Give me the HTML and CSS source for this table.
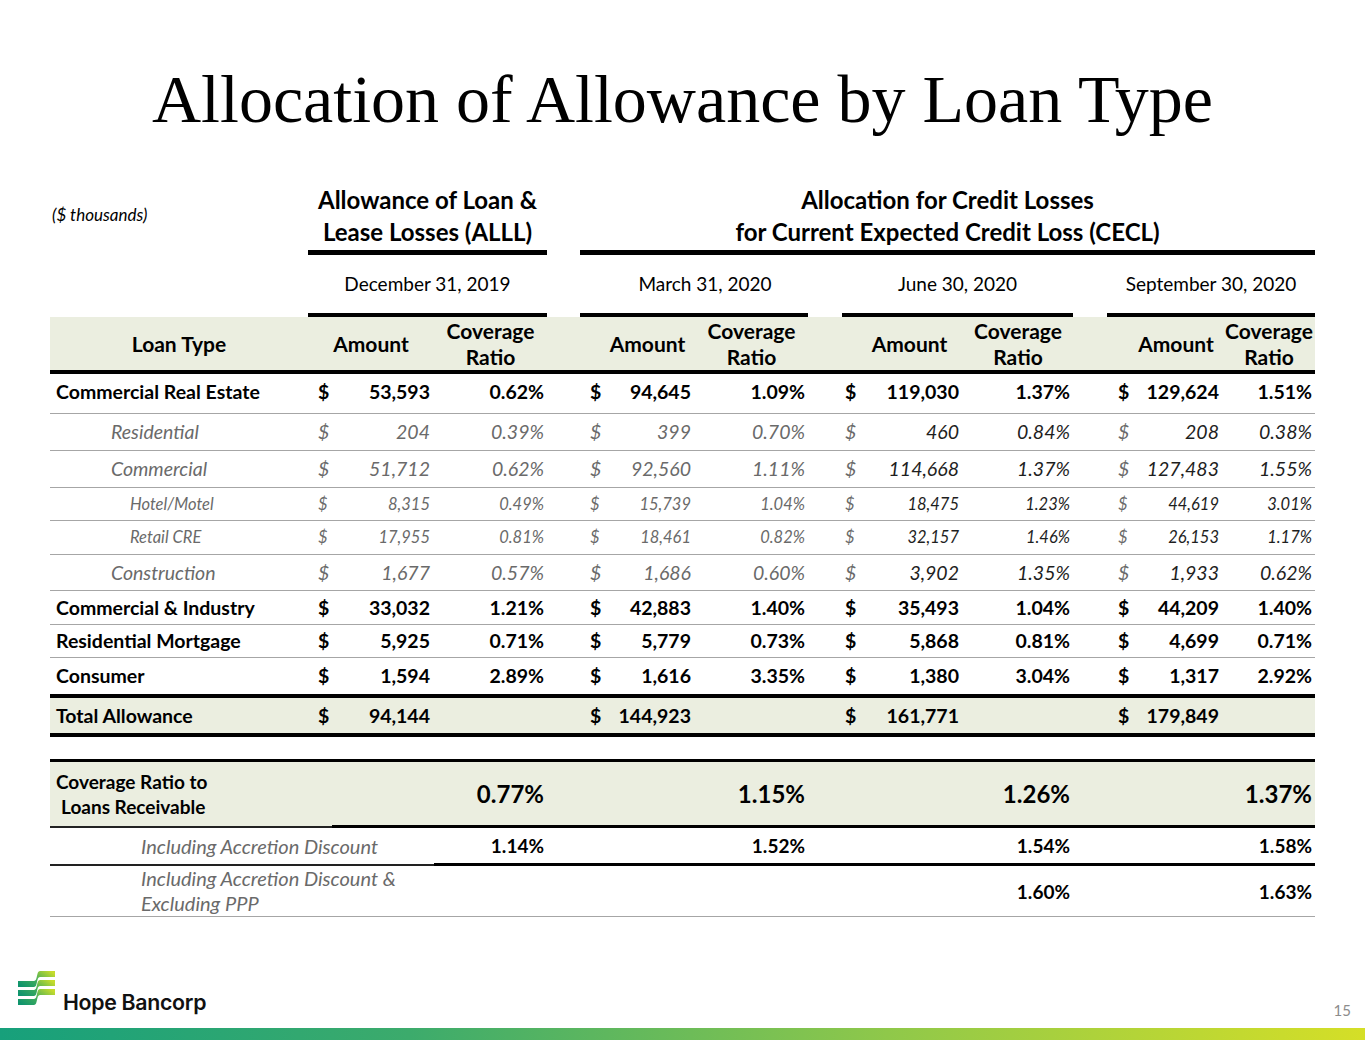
FILE: index.html
```html
<!DOCTYPE html>
<html>
<head>
<meta charset="utf-8">
<title>Allocation of Allowance by Loan Type</title>
<link rel="stylesheet" href="styles.css">
</head>
<body>
<div class="slide">
  <h1 class="title">Allocation of Allowance by Loan Type</h1>
  <table class="alloc">
    <colgroup>
      <col style="width:258px"><col style="width:24px"><col style="width:102px"><col style="width:113px">
      <col style="width:33px"><col style="width:32px"><col style="width:83px"><col style="width:113px">
      <col style="width:34px"><col style="width:28px"><col style="width:93px"><col style="width:110px">
      <col style="width:34px"><col style="width:33px"><col style="width:83px"><col style="width:92px">
    </colgroup>
    <tr class="grp-row">
      <td class="units">($ thousands)</td>
      <td colspan="3" class="grp">Allowance of Loan &amp;<br>Lease Losses (ALLL)</td>
      <td></td>
      <td colspan="11" class="grp">Allocation for Credit Losses<br>for Current Expected Credit Loss (CECL)</td>
    </tr>
    <tr class="date-row">
      <td></td>
      <td colspan="3" class="date">December 31, 2019</td>
      <td></td>
      <td colspan="3" class="date date-mar">March 31, 2020</td>
      <td></td>
      <td colspan="3" class="date">June 30, 2020</td>
      <td></td>
      <td colspan="3" class="date">September 30, 2020</td>
    </tr>
    <tr class="head-row">
      <th class="lt">Loan Type</th>
      <th colspan="2" class="amt">Amount</th><th class="cov">Coverage<br>Ratio</th><th></th>
      <th colspan="2" class="amt amt2">Amount</th><th class="cov">Coverage<br>Ratio</th><th></th>
      <th colspan="2" class="amt amt3">Amount</th><th class="cov">Coverage<br>Ratio</th><th></th>
      <th colspan="2" class="amt amt4">Amount</th><th class="cov">Coverage<br>Ratio</th>
    </tr>
    <tr class="main r-cre">
      <td class="lbl">Commercial Real Estate</td>
      <td class="d d1">$</td><td class="n">53,593</td><td class="r">0.62%</td><td></td>
      <td class="d d2">$</td><td class="n">94,645</td><td class="r">1.09%</td><td></td>
      <td class="d d3">$</td><td class="n">119,030</td><td class="r">1.37%</td><td></td>
      <td class="d d4">$</td><td class="n">129,624</td><td class="r">1.51%</td>
    </tr>
    <tr class="sub r-res">
      <td class="lbl">Residential</td>
      <td class="d d1">$</td><td class="n">204</td><td class="r">0.39%</td><td></td>
      <td class="d d2">$</td><td class="n">399</td><td class="r">0.70%</td><td></td>
      <td class="d d3">$</td><td class="n dk">460</td><td class="r dk">0.84%</td><td></td>
      <td class="d d4">$</td><td class="n dk">208</td><td class="r dk">0.38%</td>
    </tr>
    <tr class="sub r-com">
      <td class="lbl">Commercial</td>
      <td class="d d1">$</td><td class="n">51,712</td><td class="r">0.62%</td><td></td>
      <td class="d d2">$</td><td class="n">92,560</td><td class="r">1.11%</td><td></td>
      <td class="d d3">$</td><td class="n dk">114,668</td><td class="r dk">1.37%</td><td></td>
      <td class="d d4">$</td><td class="n dk">127,483</td><td class="r dk">1.55%</td>
    </tr>
    <tr class="sub2 r-hot">
      <td class="lbl">Hotel/Motel</td>
      <td class="d d1">$</td><td class="n">8,315</td><td class="r">0.49%</td><td></td>
      <td class="d d2">$</td><td class="n">15,739</td><td class="r">1.04%</td><td></td>
      <td class="d d3">$</td><td class="n dk">18,475</td><td class="r dk">1.23%</td><td></td>
      <td class="d d4">$</td><td class="n dk">44,619</td><td class="r dk">3.01%</td>
    </tr>
    <tr class="sub2 r-ret">
      <td class="lbl">Retail CRE</td>
      <td class="d d1">$</td><td class="n">17,955</td><td class="r">0.81%</td><td></td>
      <td class="d d2">$</td><td class="n">18,461</td><td class="r">0.82%</td><td></td>
      <td class="d d3">$</td><td class="n dk">32,157</td><td class="r dk">1.46%</td><td></td>
      <td class="d d4">$</td><td class="n dk">26,153</td><td class="r dk">1.17%</td>
    </tr>
    <tr class="sub r-con">
      <td class="lbl">Construction</td>
      <td class="d d1">$</td><td class="n">1,677</td><td class="r">0.57%</td><td></td>
      <td class="d d2">$</td><td class="n">1,686</td><td class="r">0.60%</td><td></td>
      <td class="d d3">$</td><td class="n dk">3,902</td><td class="r dk">1.35%</td><td></td>
      <td class="d d4">$</td><td class="n dk">1,933</td><td class="r dk">0.62%</td>
    </tr>
    <tr class="main r-ci">
      <td class="lbl">Commercial &amp; Industry</td>
      <td class="d d1">$</td><td class="n">33,032</td><td class="r">1.21%</td><td></td>
      <td class="d d2">$</td><td class="n">42,883</td><td class="r">1.40%</td><td></td>
      <td class="d d3">$</td><td class="n">35,493</td><td class="r">1.04%</td><td></td>
      <td class="d d4">$</td><td class="n">44,209</td><td class="r">1.40%</td>
    </tr>
    <tr class="main r-rm">
      <td class="lbl">Residential Mortgage</td>
      <td class="d d1">$</td><td class="n">5,925</td><td class="r">0.71%</td><td></td>
      <td class="d d2">$</td><td class="n">5,779</td><td class="r">0.73%</td><td></td>
      <td class="d d3">$</td><td class="n">5,868</td><td class="r">0.81%</td><td></td>
      <td class="d d4">$</td><td class="n">4,699</td><td class="r">0.71%</td>
    </tr>
    <tr class="main r-cons">
      <td class="lbl">Consumer</td>
      <td class="d d1">$</td><td class="n">1,594</td><td class="r">2.89%</td><td></td>
      <td class="d d2">$</td><td class="n">1,616</td><td class="r">3.35%</td><td></td>
      <td class="d d3">$</td><td class="n">1,380</td><td class="r">3.04%</td><td></td>
      <td class="d d4">$</td><td class="n">1,317</td><td class="r">2.92%</td>
    </tr>
    <tr class="main r-tot">
      <td class="lbl">Total Allowance</td>
      <td class="d d1">$</td><td class="n">94,144</td><td class="r"></td><td></td>
      <td class="d d2">$</td><td class="n">144,923</td><td class="r"></td><td></td>
      <td class="d d3">$</td><td class="n">161,771</td><td class="r"></td><td></td>
      <td class="d d4">$</td><td class="n">179,849</td><td class="r"></td>
    </tr>
    <tr class="spacer"><td colspan="16"></td></tr>
    <tr class="cov-row">
      <td colspan="2" class="cov-lbl">Coverage Ratio to<br><span class="indent">Loans Receivable</span></td>
      <td></td><td class="r big">0.77%</td><td></td>
      <td colspan="2"></td><td class="r big">1.15%</td><td></td>
      <td colspan="2"></td><td class="r big">1.26%</td><td></td>
      <td colspan="2"></td><td class="r big">1.37%</td>
    </tr>
    <tr class="inc-row">
      <td colspan="3" class="inc-lbl">Including Accretion Discount</td>
      <td class="r">1.14%</td><td></td>
      <td colspan="2"></td><td class="r">1.52%</td><td></td>
      <td colspan="2"></td><td class="r">1.54%</td><td></td>
      <td colspan="2"></td><td class="r">1.58%</td>
    </tr>
    <tr class="ppp-row">
      <td colspan="3" class="inc-lbl">Including Accretion Discount &amp;<br>Excluding PPP</td>
      <td class="r"></td><td></td>
      <td colspan="2"></td><td class="r"></td><td></td>
      <td colspan="2"></td><td class="r">1.60%</td><td></td>
      <td colspan="2"></td><td class="r">1.63%</td>
    </tr>
  </table>

  <footer class="footer">
    <div class="foot-row">
      <div class="brand">
        <svg class="logo" viewBox="0 0 37 34" width="37" height="34" aria-hidden="true">
          <defs>
            <linearGradient id="lg" x1="0" y1="0.8" x2="1" y2="0.2">
              <stop offset="0" stop-color="#0f946d"/>
              <stop offset="0.45" stop-color="#3fab5c"/>
              <stop offset="1" stop-color="#c6dc2c"/>
            </linearGradient>
          </defs>
          <path fill="url(#lg)" d="M0,10 L16,10 C20,10 18,0 22,0 L37,0 L37,6 L22,6 C18,6 20,16 16,16 L0,16 Z"/>
          <path fill="url(#lg)" d="M0,19 L16,19 C20,19 18,9 22,9 L37,9 L37,15 L22,15 C18,15 20,25 16,25 L0,25 Z"/>
          <path fill="url(#lg)" d="M0,28 L16,28 C20,28 18,18 22,18 L37,18 L37,24 L22,24 C18,24 20,34 16,34 L0,34 Z"/>
        </svg>
        <span class="brand-name">Hope Bancorp</span>
      </div>
      <div class="page-num">15</div>
    </div>
    <div class="bar"></div>
  </footer>
</div>
</body>
</html>
```
FILE: styles.css
```css
html, body {
  margin: 0;
  padding: 0;
  background: #ffffff;
}

.slide {
  width: 1365px;
  height: 1055px;
  display: flex;
  flex-direction: column;
  font-family: Lato, "Liberation Sans", sans-serif;
  color: #000;
}

.title {
  margin: 0;
  padding-top: 59px;
  font-family: "Liberation Serif", "Times New Roman", serif;
  font-weight: normal;
  font-size: 68px;
  line-height: 80px;
  text-align: center;
  color: #000;
}

.alloc {
  margin: 45px 0 0 50px;
  width: 1265px;
  table-layout: fixed;
  border-collapse: separate;
  border-spacing: 0;
  font-size: 19px;
}

.alloc td, .alloc th {
  padding: 0;
  white-space: nowrap;
}

/* group title row */
.grp-row td {
  vertical-align: top;
}
.units {
  font-style: italic;
  font-size: 17px;
  line-height: 18px;
  padding: 22px 0 0 2px !important;
  color: #000;
}
.grp {
  font-weight: bold;
  font-size: 24px;
  line-height: 32px;
  text-align: center;
  padding-bottom: 2px !important;
  border-bottom: 5px solid #000;
}

/* dates */
.date {
  text-align: center;
  font-size: 19px;
  line-height: 20px;
  padding: 19px 0 !important;
  border-bottom: 4px solid #000;
}
.date-mar {
  padding-left: 22px !important;
}

/* header row */
.head-row th {
  background: #ebeee0;
  border-bottom: 4px solid #000;
  font-weight: bold;
  font-size: 21px;
  line-height: 26px;
  height: 53px;
  text-align: center;
  vertical-align: middle;
}
.head-row .amt2 { padding-left: 20px; }
.head-row .amt3 { padding-left: 14px; }
.head-row .amt4 { padding-left: 22px; }

/* data rows */
.main td, .sub td, .sub2 td {
  border-bottom: 1px solid #a6a6a6;
  vertical-align: middle;
}
.main td {
  font-weight: bold;
  font-size: 19.5px;
  color: #000;
}
.sub td {
  font-style: italic;
  font-size: 19.5px;
  color: #6a6a6a;
}
.sub2 td {
  font-style: italic;
  font-size: 16.5px;
  color: #6a6a6a;
}
.sub td.dk, .sub2 td.dk {
  color: #1e1e1e;
}

.main .lbl { padding-left: 6px; }
.sub .lbl { padding-left: 61px; }
.sub2 .lbl { padding-left: 80px; }

.d1 { padding-left: 10px !important; }
.d2 { padding-left: 10px !important; }
.d3 { padding-left: 3px !important; }
.d4 { padding-left: 11px !important; }
.n { text-align: right; padding-right: 4px !important; }
.r { text-align: right; padding-right: 3px !important; }

.r-cre td { line-height: 36px; padding-bottom: 3px; }
.r-res td, .r-com td { line-height: 36px; }
.r-hot td { line-height: 32px; }
.r-ret td { line-height: 33px; }
.r-con td { line-height: 35px; }
.r-ci td { line-height: 33px; }
.r-rm td { line-height: 32px; }
.r-cons td { line-height: 36px; border-bottom: 4px solid #000; }
.r-tot td {
  line-height: 35px;
  background: #ebeee0;
  border-bottom: 4px solid #000;
}

.spacer td {
  height: 22px;
}

/* coverage block */
.cov-row td {
  background: #ebeee0;
  border-top: 3px solid #000;
  border-bottom: 3px solid #000;
  vertical-align: middle;
  font-weight: bold;
}
.cov-row td.cov-lbl {
  border-bottom: 2px solid #222;
  font-size: 19px;
  line-height: 25px;
  padding: 7px 0 7px 6px;
}
.cov-lbl .indent {
  padding-left: 5px;
}
.big {
  font-size: 24px;
}

.inc-row td {
  border-bottom: 3px solid #000;
  line-height: 35px;
  font-weight: bold;
  font-size: 19px;
  vertical-align: middle;
}
.inc-lbl {
  font-weight: normal !important;
  font-style: italic;
  font-size: 20px !important;
  color: #6a6a6a;
  padding-left: 91px !important;
}
.inc-row td.inc-lbl {
  border-bottom: 2px solid #222;
}

.ppp-row td {
  border-bottom: 1px solid #a6a6a6;
  line-height: 25px;
  font-weight: bold;
  font-size: 19px;
  vertical-align: middle;
}

/* footer */
.footer {
  margin-top: auto;
}
.foot-row {
  display: flex;
  justify-content: space-between;
  align-items: flex-start;
  padding: 1px 14px 0 18px;
  height: 57px;
}
.brand {
  display: flex;
  align-items: flex-start;
  gap: 8px;
}
.logo {
  display: block;
}
.brand-name {
  font-family: Inter, "Liberation Sans", sans-serif;
  font-weight: 600;
  font-size: 21.3px;
  line-height: 24px;
  letter-spacing: -0.3px;
  color: #111;
  margin-top: 19px;
}
.page-num {
  font-family: Lato, "Liberation Sans", sans-serif;
  font-size: 15px;
  line-height: 18px;
  color: #8c8c8c;
  margin-top: 30px;
}
.bar {
  height: 12px;
  margin-bottom: 15px;
  background: linear-gradient(90deg, #17a07b 0%, #3cab6c 30%, #8fc84a 65%, #d5df27 100%);
}
```
